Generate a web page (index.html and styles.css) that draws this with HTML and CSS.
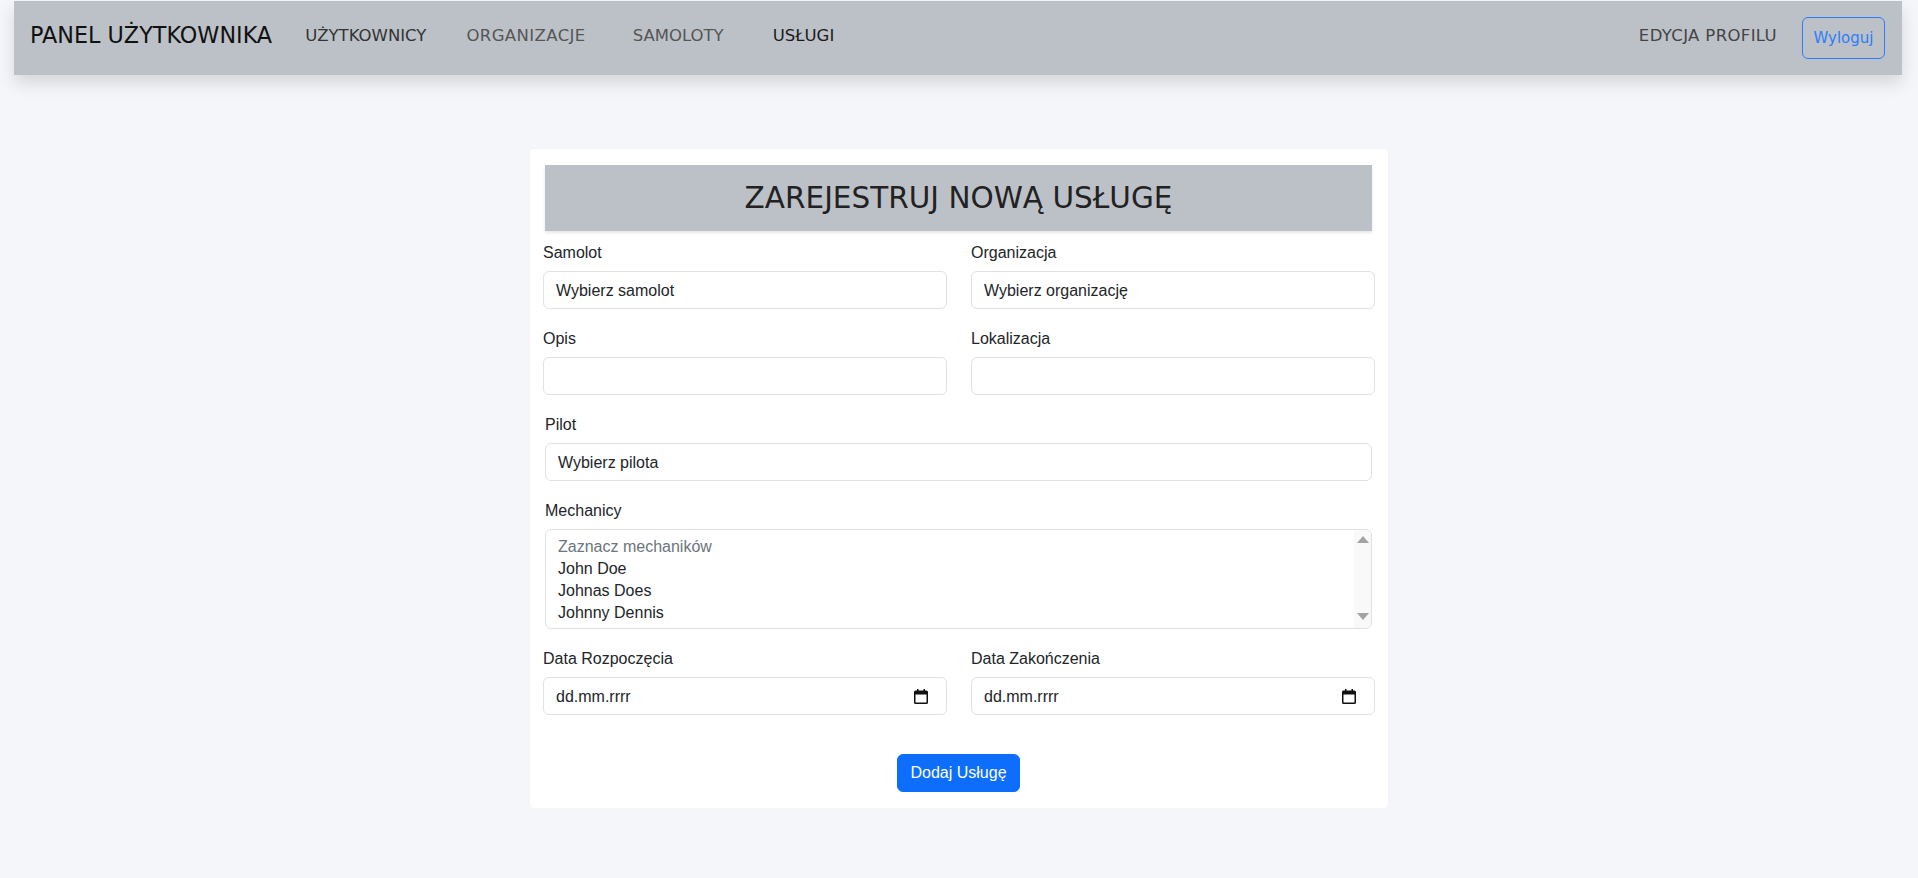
FILE: index.html
```html
<!DOCTYPE html>
<html lang="pl">
<head>
<meta charset="utf-8">
<title>Panel użytkownika</title>
<link rel="stylesheet" href="styles.css">
</head>
<body>
<header class="navbar">
  <div class="nav-left">
    <span class="brand">PANEL UŻYTKOWNIKA</span>
    <ul class="nav-links">
      <li class="nav-item l1"><a class="nav-link dark">UŻYTKOWNICY</a></li>
      <li class="nav-item l2"><a class="nav-link">ORGANIZACJE</a></li>
      <li class="nav-item l3"><a class="nav-link">SAMOLOTY</a></li>
      <li class="nav-item l4"><a class="nav-link active">USŁUGI</a></li>
    </ul>
  </div>
  <div class="nav-right">
    <a class="nav-link profile">EDYCJA PROFILU</a>
    <button class="btn-logout" type="button">Wyloguj</button>
  </div>
</header>

<main class="page">
  <section class="card">
    <h1 class="card-title">ZAREJESTRUJ NOWĄ USŁUGĘ</h1>
    <form class="form">
      <div class="row">
        <div class="field">
          <label class="label">Samolot</label>
          <div class="control">Wybierz samolot</div>
        </div>
        <div class="field">
          <label class="label">Organizacja</label>
          <div class="control">Wybierz organizację</div>
        </div>
      </div>
      <div class="row">
        <div class="field">
          <label class="label">Opis</label>
          <div class="control"></div>
        </div>
        <div class="field">
          <label class="label">Lokalizacja</label>
          <div class="control"></div>
        </div>
      </div>
      <div class="field full">
        <label class="label">Pilot</label>
        <div class="control">Wybierz pilota</div>
      </div>
      <div class="field full">
        <label class="label">Mechanicy</label>
        <div class="multi">
          <div class="multi-opts">
            <div class="opt muted">Zaznacz mechaników</div>
            <div class="opt">John Doe</div>
            <div class="opt">Johnas Does</div>
            <div class="opt">Johnny Dennis</div>
          </div>
          <div class="multi-bar">
            <span class="tri up"></span>
            <span class="tri down"></span>
          </div>
        </div>
      </div>
      <div class="row">
        <div class="field">
          <label class="label">Data Rozpoczęcia</label>
          <div class="control date"><span>dd.mm.rrrr</span>
            <svg class="cal" width="14" height="15" viewBox="0 0 14 15"><path d="M3 0h1.5v1.5h5V0H11v1.5h1.5A1.5 1.5 0 0 1 14 3v10.5a1.5 1.5 0 0 1-1.5 1.5h-11A1.5 1.5 0 0 1 0 13.5V3a1.5 1.5 0 0 1 1.5-1.5H3zM1.5 5.5v8h11v-8z" fill="#111"/></svg>
          </div>
        </div>
        <div class="field">
          <label class="label">Data Zakończenia</label>
          <div class="control date"><span>dd.mm.rrrr</span>
            <svg class="cal" width="14" height="15" viewBox="0 0 14 15"><path d="M3 0h1.5v1.5h5V0H11v1.5h1.5A1.5 1.5 0 0 1 14 3v10.5a1.5 1.5 0 0 1-1.5 1.5h-11A1.5 1.5 0 0 1 0 13.5V3a1.5 1.5 0 0 1 1.5-1.5H3zM1.5 5.5v8h11v-8z" fill="#111"/></svg>
          </div>
        </div>
      </div>
      <div class="actions">
        <button class="btn-primary" type="button">Dodaj Usługę</button>
      </div>
    </form>
  </section>
</main>
</body>
</html>
```
FILE: styles.css
```css
* { box-sizing: border-box; }
html, body { margin: 0; padding: 0; }
body {
  background: #f5f6f9;
  font-family: "Liberation Sans", Arial, sans-serif;
  font-size: 16px;
  color: #212529;
}

/* NAVBAR */
.navbar {
  margin: 1px 16px 0 14px;
  height: 74px;
  background: #bcc1c8;
  display: flex;
  align-items: center;
  justify-content: space-between;
  padding: 0 17px 0 16px;
  box-shadow: 0 8px 16px rgba(0, 0, 0, 0.13);
}
.nav-left {
  display: flex;
  align-items: center;
  padding-bottom: 6px;
}
.brand {
  font-family: "DejaVu Sans", sans-serif;
  font-size: 22.3px;
  color: #111;
  white-space: nowrap;
}
.nav-links {
  list-style: none;
  margin: 0 0 0 33px;
  padding: 0;
  display: flex;
  align-items: center;
}
.nav-item.l2 { margin-left: 40px; }
.nav-item.l3 { margin-left: 47px; }
.nav-item.l4 { margin-left: 49px; }
.nav-link {
  font-family: "DejaVu Sans", sans-serif;
  font-size: 16.5px;
  color: #555;
  white-space: nowrap;
  text-decoration: none;
}
.l2 .nav-link { letter-spacing: 0.4px; }
.nav-link.dark { color: #333; }
.nav-link.active { color: #1a1a1a; }
.nav-right {
  display: flex;
  align-items: center;
}
.profile {
  color: #444;
  margin-right: 25px;
  padding-bottom: 6px;
  letter-spacing: 0.35px;
}
.btn-logout {
  width: 83px;
  height: 42px;
  border: 1px solid #2f7df6;
  border-radius: 6px;
  background: transparent;
  color: #2f7df6;
  font-family: "DejaVu Sans", sans-serif;
  font-size: 15px;
  padding: 0;
}

/* CARD */
.page {
  padding-top: 74px;
}
.card {
  width: 858px;
  margin: 0 auto;
  background: #fff;
  border-radius: 4px;
  box-shadow: 0 0 2px rgba(0, 0, 0, 0.04);
  padding: 16px 16px 16px 15px;
}
.card-title {
  margin: 0 0 8px;
  height: 66px;
  background: #bcc1c8;
  display: flex;
  align-items: center;
  justify-content: center;
  font-family: "DejaVu Sans", sans-serif;
  font-weight: normal;
  font-size: 29.5px;
  color: #222;
  box-shadow: 0 2px 3px rgba(0, 0, 0, 0.1);
}
.form { display: flex; flex-direction: column; }
.row {
  display: flex;
  gap: 24px;
  margin: 0 -3px 0 -2px;
}
.row .field { flex: 1 1 0; }
.field { margin-bottom: 16px; }
.label {
  display: block;
  line-height: 24px;
  padding-top: 2px;
  margin-bottom: 6px;
}
.control {
  height: 38px;
  border: 1px solid #dee2e6;
  border-radius: 6px;
  padding: 2px 12px 0;
  display: flex;
  align-items: center;
  background: #fff;
  line-height: 24px;
}
.control.date { justify-content: space-between; padding-right: 18px; }
.cal { display: block; margin-top: -2px; }

.multi {
  height: 100px;
  border: 1px solid #dee2e6;
  border-radius: 6px;
  display: flex;
  overflow: hidden;
}
.multi-opts {
  flex: 1;
  padding: 6px 12px 4px;
}
.opt { line-height: 22px; height: 22px; }
.opt.muted { color: #6c757d; }
.multi-bar {
  width: 17px;
  background: #f9f9f9;
  display: flex;
  flex-direction: column;
  justify-content: space-between;
  align-items: center;
  padding: 6px 0 8px;
}
.tri {
  width: 0;
  height: 0;
  border-left: 6px solid transparent;
  border-right: 6px solid transparent;
}
.tri.up { border-bottom: 7px solid #a3a3a3; }
.tri.down { border-top: 7px solid #a3a3a3; }

.actions {
  display: flex;
  justify-content: center;
  padding-top: 23px;
}
.btn-primary {
  height: 38px;
  padding: 0 12px;
  border: 1px solid #0d6efd;
  border-radius: 6px;
  background: #0d6efd;
  color: #fff;
  font-family: "Liberation Sans", Arial, sans-serif;
  font-size: 16px;
}
```
